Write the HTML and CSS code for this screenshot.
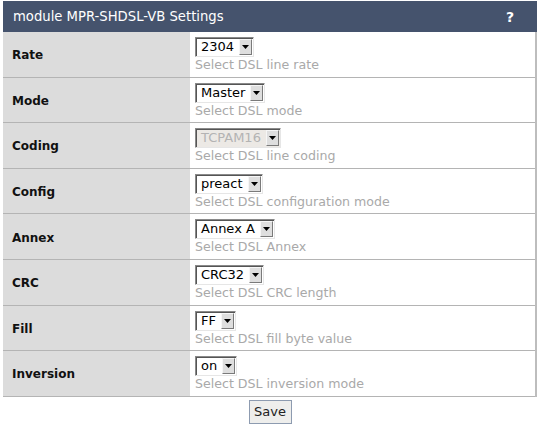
FILE: index.html
```html
<!DOCTYPE html>
<html>
<head>
<meta charset="utf-8">
<link rel="stylesheet" href="styles.css">
</head>
<body>
<div class="panel">
  <div class="head"><span class="title">module MPR-SHDSL-VB Settings</span><span class="help">?</span></div>
  <div class="rows">
    <div class="row"><div class="label">Rate</div><div class="value"><span class="sel"><span class="val">2304</span><span class="arr"><svg width="7" height="4" viewBox="0 0 7 4"><path d="M0 0H7L3.5 4Z" fill="#000"/></svg></span></span><div class="hint">Select DSL line rate</div></div></div>
    <div class="row"><div class="label">Mode</div><div class="value"><span class="sel"><span class="val">Master</span><span class="arr"><svg width="7" height="4" viewBox="0 0 7 4"><path d="M0 0H7L3.5 4Z" fill="#000"/></svg></span></span><div class="hint">Select DSL mode</div></div></div>
    <div class="row"><div class="label">Coding</div><div class="value"><span class="sel dis"><span class="val">TCPAM16</span><span class="arr"><svg width="7" height="4" viewBox="0 0 7 4"><path d="M0 0H7L3.5 4Z" fill="#000"/></svg></span></span><div class="hint">Select DSL line coding</div></div></div>
    <div class="row"><div class="label">Config</div><div class="value"><span class="sel"><span class="val">preact</span><span class="arr"><svg width="7" height="4" viewBox="0 0 7 4"><path d="M0 0H7L3.5 4Z" fill="#000"/></svg></span></span><div class="hint">Select DSL configuration mode</div></div></div>
    <div class="row"><div class="label">Annex</div><div class="value"><span class="sel"><span class="val">Annex A</span><span class="arr"><svg width="7" height="4" viewBox="0 0 7 4"><path d="M0 0H7L3.5 4Z" fill="#000"/></svg></span></span><div class="hint">Select DSL Annex</div></div></div>
    <div class="row"><div class="label">CRC</div><div class="value"><span class="sel"><span class="val">CRC32</span><span class="arr"><svg width="7" height="4" viewBox="0 0 7 4"><path d="M0 0H7L3.5 4Z" fill="#000"/></svg></span></span><div class="hint">Select DSL CRC length</div></div></div>
    <div class="row"><div class="label">Fill</div><div class="value"><span class="sel"><span class="val">FF</span><span class="arr"><svg width="7" height="4" viewBox="0 0 7 4"><path d="M0 0H7L3.5 4Z" fill="#000"/></svg></span></span><div class="hint">Select DSL fill byte value</div></div></div>
    <div class="row"><div class="label">Inversion</div><div class="value"><span class="sel"><span class="val">on</span><span class="arr"><svg width="7" height="4" viewBox="0 0 7 4"><path d="M0 0H7L3.5 4Z" fill="#000"/></svg></span></span><div class="hint">Select DSL inversion mode</div></div></div>
  </div>
  <div class="actions"><button class="save" type="button">Save</button></div>
</div>
</body>
</html>
```
FILE: styles.css
```css
body {
  margin: 0;
  background: #fff;
  font-family: "DejaVu Sans", sans-serif;
}
.panel {
  margin: 1px 3px 0 3px;
  width: 534px;
}
.head {
  height: 31px;
  background: #45536d;
  color: #fff;
  display: flex;
  align-items: center;
  justify-content: space-between;
  padding: 0 23px 0 10px;
  font-size: 13.2px;
}
.help {
  font-weight: bold;
  font-size: 14px;
}
.rows {
  border-right: 2px solid #bdbdbd;
}
.row {
  display: grid;
  grid-template-columns: 187px 1fr;
  border-bottom: 1px solid #b4b4b4;
}
.label {
  background: #dcdcdc;
  display: flex;
  align-items: center;
  padding: 2px 0 0 9px;
  font-size: 12px;
  font-weight: bold;
  color: #111;
}
.value {
  display: flex;
  flex-direction: column;
  align-items: flex-start;
  padding: 5px 5px 4.6px 5px;
}
.sel {
  display: flex;
  align-items: center;
  box-sizing: border-box;
  height: 20px;
  background: #fff;
  border: 1px solid;
  border-color: #8a8a8a #e6e6e6 #e6e6e6 #8a8a8a;
  box-shadow: inset 1px 1px 0 #555;
  font-size: 13px;
  color: #000;
}
.val {
  padding: 0 5px 0 5px;
  line-height: 16px;
}
.arr {
  width: 13px;
  height: 16px;
  box-sizing: border-box;
  background: #dedede;
  border: 1px solid;
  border-color: #f6f6f6 #7a7a7a #7a7a7a #f6f6f6;
  display: flex;
  align-items: center;
  justify-content: center;
  margin-right: 1px;
}
.sel.dis {
  background: #ece9e5;
}
.sel.dis .val {
  color: #b3b3b3;
}
.hint {
  font-size: 12.6px;
  line-height: 15px;
  color: #a9a9a9;
}
.actions {
  display: flex;
  justify-content: center;
  padding-top: 3px;
}
.save {
  font-family: "DejaVu Sans", sans-serif;
  font-size: 13px;
  height: 24px;
  width: 43px;
  padding: 0;
  background: #eeeeec;
  border: 1px solid #8d9bb0;
  color: #222;
}
```
